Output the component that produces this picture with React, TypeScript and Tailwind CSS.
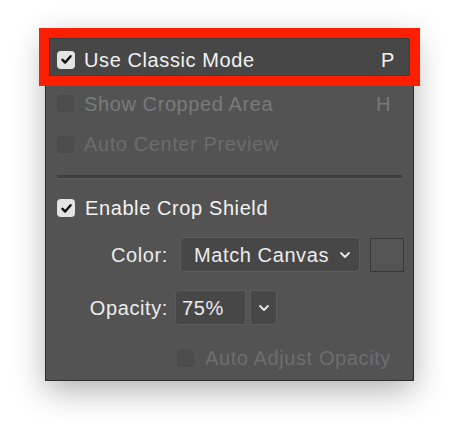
import React from 'react';

const Check = ({ checked, disabled }: { checked?: boolean; disabled?: boolean }) => {
  if (checked) {
    return (
      <span className="w-[18px] h-[18px] rounded-[4px] bg-[#e4e4e4] flex items-center justify-center shrink-0">
        <svg width="13" height="13" viewBox="0 0 13 13">
          <path d="M2.5 6.8 L5.2 9.6 L10.6 3.2" fill="none" stroke="#111" strokeWidth="2.4" strokeLinecap="round" strokeLinejoin="round" />
        </svg>
      </span>
    );
  }
  return (
    <span
      className={`w-[17px] h-[17px] rounded-[4px] shrink-0 border ${
        disabled ? 'bg-[#4d4d4d] border-[#4a4a4a]' : 'bg-[#4d4d4d] border-[#5e5e5e]'
      }`}
    />
  );
};

const Chevron = () => (
  <svg width="12" height="8" viewBox="0 0 12 8">
    <path d="M2 2 L6 6 L10 2" fill="none" stroke="#e8e8e8" strokeWidth="1.8" strokeLinecap="round" strokeLinejoin="round" />
  </svg>
);

export default function App() {
  return (
    <div
      className="w-[460px] h-[434px] bg-white pt-[29px] pl-[45px] text-[20px] tracking-[0.6px]"
      style={{ fontFamily: '"Liberation Sans", Arial, sans-serif' }}
    >
      <div className="w-[369px] h-[352px] bg-[#535353] border-x border-b border-[#2c2c2c] shadow-[0_10px_30px_rgba(0,0,0,0.3)] flex flex-col">
        {/* highlighted row */}
        <div className="-ml-[7px] -mt-px w-[381px] h-[58px] border-[10px] border-[#fe1e00] bg-[#fe1e00]">
          <div className="h-full bg-[#474747] border border-[#3d3d3d] flex items-center pt-[5px] pl-[7px] pr-[14px]">
            <Check checked />
            <span className="ml-[9px] text-[#f2f2f2]">Use Classic Mode</span>
            <span className="ml-auto text-[#f2f2f2]">P</span>
          </div>
        </div>

        <div className="h-[35px] flex items-center pl-[11px] pr-[22px] text-[#7a7a7a]">
          <Check disabled />
          <span className="ml-[10px]">Show Cropped Area</span>
          <span className="ml-auto">H</span>
        </div>
        <div className="h-[46px] flex items-center pl-[11px] text-[#6c6c6c]">
          <Check disabled />
          <span className="ml-[10px]">Auto Center Preview</span>
        </div>

        <div className="mx-[11px] mt-[8px] mb-[8px] border-t-[3px] border-[#3f3f3f] border-b border-b-[#5a5a5a]" />

        <div className="h-[42px] flex items-center pl-[11px] text-[#f2f2f2]">
          <Check checked />
          <span className="ml-[10px]">Enable Crop Shield</span>
        </div>

        <div className="mt-[8px] flex items-center text-[#ececec]">
          <span className="w-[122px] text-right">Color:</span>
          <div className="ml-[12px] w-[180px] h-[35px] rounded-[4px] bg-[#474747] border border-[#5c5c5c] flex items-center pl-[13px] pr-[8px]">
            <span>Match Canvas</span>
            <span className="ml-auto"><Chevron /></span>
          </div>
          <div className="ml-[10px] w-[34px] h-[34px] border border-[#3a3a3a] bg-[#545454]" />
        </div>

        <div className="mt-[18px] flex items-center text-[#ececec]">
          <span className="w-[122px] text-right">Opacity:</span>
          <div className="ml-[7px] w-[71px] h-[35px] rounded-l-[4px] bg-[#474747] border border-[#5c5c5c] flex items-center pl-[6px]">
            75%
          </div>
          <div className="ml-[4px] w-[27px] h-[35px] rounded-r-[4px] bg-[#474747] border border-[#5c5c5c] flex items-center justify-center">
            <Chevron />
          </div>
        </div>

        <div className="mt-[18px] flex items-center pl-[131px] text-[#6e6e6e]">
          <Check disabled />
          <span className="ml-[11px]">Auto Adjust Opacity</span>
        </div>
      </div>
    </div>
  );
}
